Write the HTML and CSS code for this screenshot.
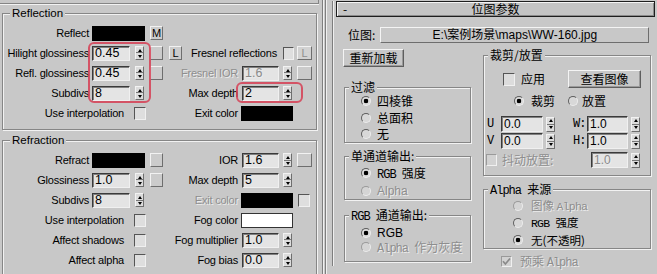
FILE: index.html
```html
<!DOCTYPE html>
<html>
<head>
<meta charset="utf-8">
<link rel="stylesheet" href="styles.css">
</head>
<body>
<div class="app">
  <div class="left">
    <div class="prev"></div>
    <fieldset class="grp">
      <legend>Reflection</legend>
      <div class="grid">
        <div class="cl"><span class="lbl">Reflect</span><span class="sw"></span><span class="sq">M</span></div>
        <div class="cr"></div>

        <div class="cl"><span class="lbl">Hilight glossiness</span><span class="edit">0.45</span><span class="spin"></span><span class="sq"></span><span class="sq">L</span></div>
        <div class="cr"><span class="rlbl wide">Fresnel reflections</span><span class="chk"></span><span class="sq dsq">L</span></div>

        <div class="cl"><span class="lbl">Refl. glossiness</span><span class="edit">0.45</span><span class="spin"></span><span class="sq"></span></div>
        <div class="cr"><span class="rlbl dis">Fresnel IOR</span><span class="edit dis">1.6</span><span class="spin"></span><span class="sq"></span></div>

        <div class="cl"><span class="lbl">Subdivs</span><span class="edit">8</span><span class="spin"></span></div>
        <div class="cr"><span class="rlbl">Max depth</span><span class="edit">2</span><span class="spin"></span></div>

        <div class="cl"><span class="lbl long">Use interpolation</span><span class="chk"></span></div>
        <div class="cr"><span class="rlbl">Exit color</span><span class="sw"></span></div>
      </div>
    </fieldset>
    <fieldset class="grp refr">
      <legend>Refraction</legend>
      <div class="grid">
        <div class="cl"><span class="lbl">Refract</span><span class="sw"></span><span class="sq"></span></div>
        <div class="cr"><span class="rlbl">IOR</span><span class="edit">1.6</span><span class="spin"></span><span class="sq"></span></div>

        <div class="cl"><span class="lbl">Glossiness</span><span class="edit">1.0</span><span class="spin"></span><span class="sq"></span></div>
        <div class="cr"><span class="rlbl">Max depth</span><span class="edit">5</span><span class="spin"></span></div>

        <div class="cl"><span class="lbl">Subdivs</span><span class="edit">8</span><span class="spin"></span></div>
        <div class="cr"><span class="rlbl dis">Exit color</span><span class="sw"></span><span class="chk"></span></div>

        <div class="cl"><span class="lbl long">Use interpolation</span><span class="chk"></span></div>
        <div class="cr"><span class="rlbl">Fog color</span><span class="sw white"></span></div>

        <div class="cl"><span class="lbl long">Affect shadows</span><span class="chk"></span></div>
        <div class="cr"><span class="rlbl">Fog multiplier</span><span class="edit">1.0</span><span class="spin"></span></div>

        <div class="cl"><span class="lbl long">Affect alpha</span><span class="chk"></span></div>
        <div class="cr"><span class="rlbl">Fog bias</span><span class="edit">0.0</span><span class="spin"></span></div>
      </div>
    </fieldset>
  </div>

  <div class="divider"></div>

  <div class="right">
    <div class="rollout">
      <div class="hdr"><span class="minus">-</span><span class="title">位图参数</span><span></span></div>
      <div class="pathrow"><span>位图:</span><span class="path">E:\案例场景\maps\WW-160.jpg</span></div>
      <div class="cols">
        <div class="colL">
          <div class="btn reload">重新加载</div>
          <fieldset class="g filt">
            <legend>过滤</legend>
            <div class="rows">
              <div class="rrow"><span class="rd on"></span><span class="rt">四棱锥</span></div>
              <div class="rrow"><span class="rd"></span><span class="rt">总面积</span></div>
              <div class="rrow"><span class="rd"></span><span class="rt">无</span></div>
            </div>
          </fieldset>
          <fieldset class="g mono">
            <legend>单通道输出:</legend>
            <div class="rows">
              <div class="rrow"><span class="rd on"></span><span class="rt"><span class="m">RGB </span>强度</span></div>
              <div class="rrow"><span class="rd dr"></span><span class="rt dis sans">Alpha</span></div>
            </div>
          </fieldset>
          <fieldset class="g rgbo">
            <legend><span class="m">RGB </span>通道输出:</legend>
            <div class="rows">
              <div class="rrow"><span class="rd on"></span><span class="rt sans">RGB</span></div>
              <div class="rrow"><span class="rd dr"></span><span class="rt dis"><span class="m">Alpha </span>作为灰度</span></div>
            </div>
          </fieldset>
        </div>
        <div class="colR">
          <fieldset class="g crop">
            <legend>裁剪/放置</legend>
            <div class="crow ra"><span class="cb"></span><span class="apply">应用</span><span class="btn view">查看图像</span></div>
            <div class="crow rb"><span class="rd on"></span><span class="t1">裁剪</span><span class="rd r2"></span><span class="t2">放置</span></div>
            <div class="crow ru"><span class="ul m">U</span><span class="redit w42">0.0</span><span class="rspin"></span><span class="ul ul2 m">W:</span><span class="redit w41">1.0</span><span class="rspin"></span></div>
            <div class="crow rv"><span class="ul m">V</span><span class="redit w42">0.0</span><span class="rspin"></span><span class="ul ul2 m">H:</span><span class="redit w41">1.0</span><span class="rspin"></span></div>
            <div class="crow rj"><span class="cb cbd"></span><span class="jt dis">抖动放置:</span><span class="redit w37 dis">1.0</span><span class="rspin"></span></div>
          </fieldset>
          <fieldset class="g asrc">
            <legend><span class="m">Alpha </span>来源</legend>
            <div class="arow"><span class="rd dr"></span><span class="at dis">图像 <span class="m">Alpha</span></span></div>
            <div class="arow"><span class="rd"></span><span class="at"><span class="m">RGB </span>强度</span></div>
            <div class="arow"><span class="rd on"></span><span class="at">无(不透明)</span></div>
          </fieldset>
          <div class="pre"><span class="cb cbd pcb"><svg width="9" height="9" viewBox="0 0 9 9"><path d="M1 4.2 L3.4 7 L8 1.5" fill="none" stroke="#8a8a8a" stroke-width="1.7"/></svg></span><span class="pt dis">预乘 <span class="m">Alpha</span></span></div>
        </div>
      </div>
    </div>
  </div>

  <div class="hl hl1"></div>
  <div class="hl hl2"></div>
</div>
</body>
</html>
```

FILE: styles.css
```css
* { box-sizing: border-box; }
html, body { margin: 0; padding: 0; }
body {
  width: 657px; height: 274px; overflow: hidden;
  background: #c8c8c8; color: #000;
  font: 11px/13px "Liberation Sans", Arial, sans-serif;
}
.app { position: relative; display: flex; height: 274px; overflow: hidden; }

/* ---------- left panel ---------- */
.left { flex: none; width: 319px; }
.prev {
  height: 4px;
  border-right: 1px solid #858585; border-bottom: 1px solid #858585;
  box-shadow: 0 1px 0 #f2f2f2;
}
fieldset {
  margin: 0; padding: 0; min-width: 0;
  border: 1px solid #868686;
  box-shadow: 1px 1px 0 #f2f2f2, inset 1px 1px 0 #f2f2f2;
}
legend { padding: 0 2px; background: #c8c8c8; white-space: nowrap; }
.grp { margin: 3px 0 0 2px; width: 315px; padding: 3px 0 6px; }
.grp.refr { margin-top: 4px; }
.grp legend { margin-left: 7px; line-height: 13px; font-size: 11.5px; }
.grid { display: grid; grid-template-columns: 166px 147px; grid-auto-rows: 20px; }
.cl, .cr { display: flex; align-items: center; white-space: nowrap; }
.lbl { flex: none; width: 86px; text-align: right; letter-spacing: -0.2px; }
.lbl.long { width: 121px; }
.rlbl { flex: none; width: 69px; text-align: right; letter-spacing: -0.2px; }
.rlbl.wide { width: 108px; }
.dis { color: #8e8e8e; text-shadow: 1px 1px 0 #ececec; }

.edit {
  flex: none; height: 15px; display: flex; align-items: center; padding-left: 2px;
  background: #e4e4e4;
  border: 1px solid; border-color: #3a3a3a #f0f0f0 #f0f0f0 #3a3a3a;
  box-shadow: inset 1px 1px 0 #808080;
  font-size: 12.5px; line-height: 13px;
}
.cl .edit { margin-left: 3px; width: 38px; }
.cr .edit { margin-left: 4px; width: 37px; }
.edit.dis { color: #8a8a8a; }

.spin, .rspin {
  flex: none; width: 9px; height: 14px;
  display: flex; flex-direction: column; align-items: center; justify-content: space-around;
  border: 1px solid; border-color: #f2f2f2 #6e6e6e #6e6e6e #f2f2f2;
  background: linear-gradient(#dcdcdc 0 5.5px, #777 5.5px 6.5px, #dcdcdc 6.5px);
}
.spin::before, .rspin::before {
  content: ""; border-left: 2px solid transparent; border-right: 2px solid transparent;
  border-bottom: 3px solid #000;
}
.spin::after, .rspin::after {
  content: ""; border-left: 2px solid transparent; border-right: 2px solid transparent;
  border-top: 3px solid #000;
}
.cl .spin { margin-left: 5px; }
.cr .spin { margin-left: 4px; }

.sq {
  flex: none; width: 13px; height: 14px;
  display: flex; align-items: center; justify-content: center;
  border: 1px solid; border-color: #f2f2f2 #6e6e6e #6e6e6e #f2f2f2;
  background: #cbcbcb; font-size: 11px;
}
.cl .sq { margin-left: 6px; }
.cl .sw + .sq { margin-left: 5px; }
.cr .sq { margin-left: 5px; width: 15px; }
.cr .chk + .sq { margin-left: 3px; }
.dsq { color: #8e8e8e; background: #d2d2d2; }

.sw { flex: none; height: 15px; background: #000; }
.cl .sw { margin-left: 3px; width: 53px; }
.cr .sw { margin-left: 3px; width: 52px; }
.sw.white { background: #fff; border: 1px solid #333; }

.chk {
  flex: none; width: 12px; height: 13px; background: #dedede;
  border: 1px solid; border-color: #555 #f0f0f0 #f0f0f0 #555;
}
.cl .chk { margin-left: 10px; }
.cr .chk { margin-left: 6px; width: 11px; }
.cr .sw + .chk { margin-left: 5px; width: 12px; }

.hl {
  position: absolute;
  border: 2px solid rgba(214, 62, 84, 0.85);
  border-radius: 6px;
}
.hl1 { left: 88px; top: 42px; width: 63px; height: 61px; }
.hl2 { left: 236px; top: 82px; width: 67px; height: 21px; }

/* ---------- divider ---------- */
.divider {
  flex: none; width: 11px;
  background: linear-gradient(to right, transparent 3px, #7e7e7e 3px 4px, #efefef 4px 5px,
    transparent 5px 6px, #7e7e7e 6px 7px, #efefef 7px 8px, transparent 8px);
}

/* ---------- right panel ---------- */
.right {
  flex: 1; min-width: 0;
  font-family: "Noto Sans CJK SC", "Liberation Sans", sans-serif;
  font-size: 12px; line-height: 14px;
}
.m { font-family: "Liberation Mono", monospace; font-size: 12px; line-height: 1; letter-spacing: -1px; }
.sans { font-family: "Liberation Sans", Arial, sans-serif; }
.rollout {
  margin: 9px 0 0 2px; height: 265px;
  border-left: 1px solid #7e7e7e; box-shadow: inset 1px 0 0 #efefef;
}
.hdr {
  margin: -8px 0 0 3px; width: 319px; height: 16px;
  display: grid; grid-template-columns: 1fr auto 1fr; align-items: center;
  border: 1px solid #1e1e1e;
  box-shadow: inset 1px 1px 0 #f4f4f4, inset -1px -1px 0 #8a8a8a;
  background: #c4c4c4;
}
.minus { padding-left: 6px; }
.pathrow { display: flex; align-items: center; height: 16px; margin-top: 10px; padding-left: 15px; }
.path {
  margin-left: 5px; width: 269px; height: 16px;
  display: flex; align-items: center; justify-content: center;
  border: 1px solid; border-color: #f4f4f4 #6e6e6e #6e6e6e #f4f4f4;
  font-family: "Liberation Sans", "Noto Sans CJK SC", sans-serif;
}
.cols { display: flex; gap: 12px; margin-top: 6px; padding-left: 10px; }
.colL { flex: none; width: 128px; }
.colR { flex: none; width: 168px; }

.btn {
  display: flex; align-items: center; justify-content: center; height: 18px;
  border: 1px solid; border-color: #f4f4f4 #5e5e5e #5e5e5e #f4f4f4;
  box-shadow: inset -1px -1px 0 #9a9a9a;
}
.reload { width: 61px; }
.g legend { margin-left: 4px; line-height: 14px; }
.colL .g { margin-left: 1px; width: 127px; }

.rrow { display: flex; align-items: center; white-space: nowrap; }
.rrow .rd { margin-left: 16px; }
.rt { margin-left: 6px; }

.rd {
  flex: none; width: 10px; height: 10px; border-radius: 50%;
  border: 1px solid; border-color: #5e5e5e #ececec #ececec #5e5e5e;
  background: #d8d8d8;
}
.rd.on { background: radial-gradient(circle, #000 0 2px, #dadada 2.6px); }
.rd.dr { border-color: #9a9a9a #ececec #ececec #9a9a9a; background: #d4d4d4; }

.filt { margin-top: 13px; }
.filt .rows { margin-top: -2px; }
.filt .rrow { height: 17px; }
.filt .rrow:last-child { height: 16px; }
.mono { margin-top: 6px; }
.mono .rows { margin-top: 1px; }
.mono .rrow { height: 18px; }
.mono .rrow:last-child { height: 17px; }
.rgbo { margin-top: 8px; padding-bottom: 7px; }
.rgbo .rows { margin-top: 3px; }
.rgbo .rrow { height: 14px; }

.crop { margin-top: -1px; padding-bottom: 7px; width: 168px; }
.crow { display: flex; align-items: center; white-space: nowrap; }
.ra { margin-top: 8px; height: 18px; }
.rb { margin-top: 6px; height: 14px; }
.ru { margin-top: 8px; height: 16px; }
.rv { margin-top: 1px; height: 16px; }
.rj { margin-top: 3px; height: 16px; }

.cb {
  flex: none; width: 12px; height: 13px; background: #dcdcdc;
  border: 1px solid; border-color: #555 #f0f0f0 #f0f0f0 #555;
  display: flex; align-items: center; justify-content: center;
}
.cbd { border-color: #9a9a9a #f0f0f0 #f0f0f0 #9a9a9a; background: #d2d2d2; }
.ra .cb { margin-left: 19px; }
.apply { margin-left: 6px; }
.view { margin-left: 23px; width: 73px; }
.rb .rd { margin-left: 30px; }
.t1 { margin-left: 7px; }
.rb .r2 { margin-left: 13px; }
.t2 { margin-left: 4px; }

.ul { flex: none; width: 14px; margin-left: 3px; }
.ul2 { margin-left: 18px; }
.redit {
  flex: none; height: 16px; display: flex; align-items: center; padding-left: 2px;
  background: #e4e4e4;
  border: 1px solid; border-color: #3a3a3a #f0f0f0 #f0f0f0 #3a3a3a;
  box-shadow: inset 1px 1px 0 #808080;
  font-family: "Liberation Sans", Arial, sans-serif; font-size: 12px;
}
.redit.dis { color: #8a8a8a; }
.w42 { width: 42px; }
.w41 { width: 41px; }
.w37 { width: 37px; }
.rspin { height: 15px; margin-left: 3px; background: linear-gradient(#dcdcdc 0 6px, #777 6px 7px, #dcdcdc 7px); }
.rj .cb { margin-left: 2px; width: 11px; height: 12px; }
.jt { flex: none; width: 89px; margin-left: 5px; }

.asrc { margin-top: 6px; padding-bottom: 0; width: 168px; }
.arow { display: flex; align-items: center; height: 17px; white-space: nowrap; }
.arow .rd { margin-left: 29px; }
.at { margin-left: 8px; font-size: 11.5px; }
.at .m { font-size: 11.5px; letter-spacing: -0.8px; }

.pre { display: flex; align-items: center; height: 14px; margin-top: 5px; white-space: nowrap; }
.pcb { margin-left: 18px; width: 11px; height: 11px; }
.pt { margin-left: 8px; }
```
